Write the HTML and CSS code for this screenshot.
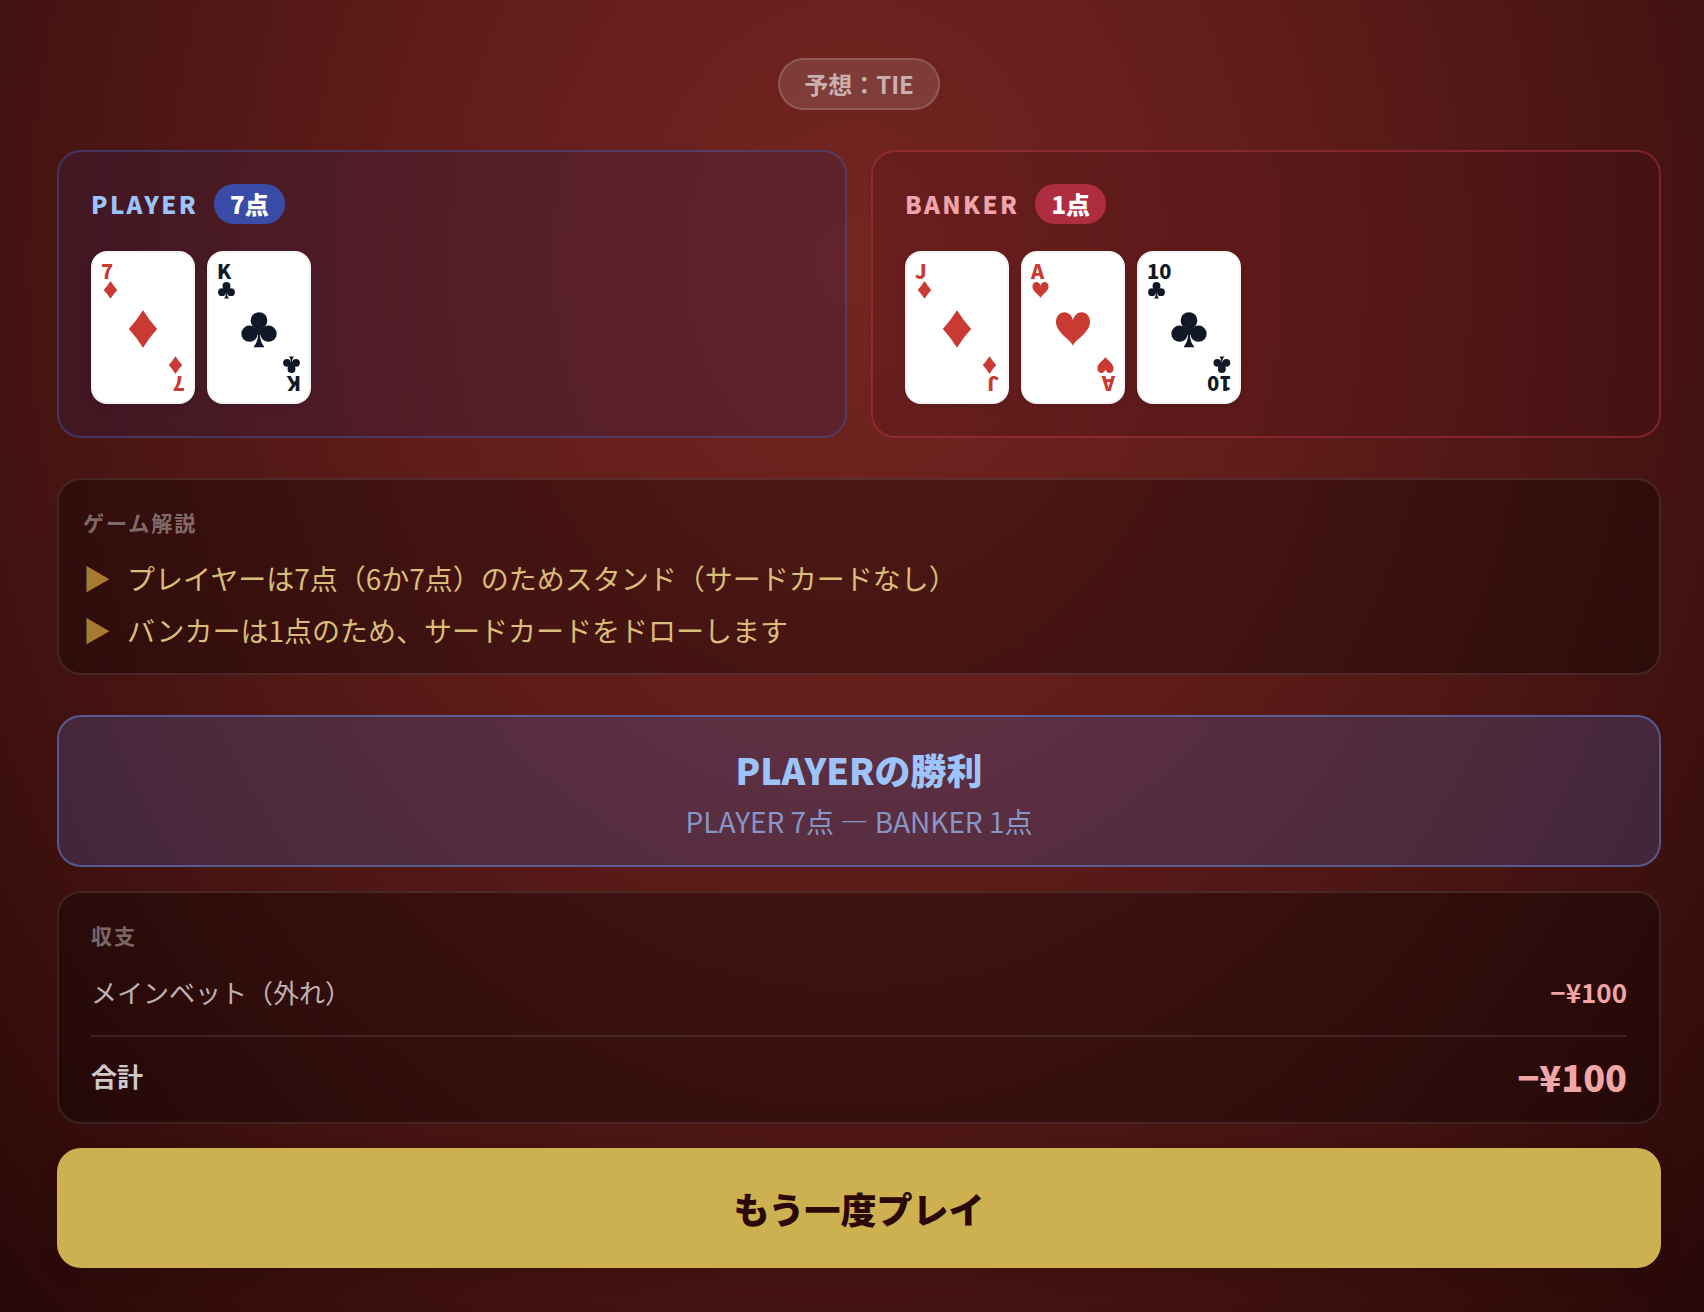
FILE: index.html
```html
<!DOCTYPE html>
<html lang="ja">
<head>
    <meta charset="UTF-8">
    <meta name="viewport" content="width=device-width, initial-scale=1.0">
    <title>バカラ</title>
    <link rel="stylesheet" href="styles.css">
</head>

<body>
    <!-- スート -->
    <svg class="defs" width="0" height="0" aria-hidden="true">
        <symbol id="diamond" viewBox="0 0 24 24">
            <path d="M12 1.400 Q15.800 7.500 20.500 12.600 Q15.800 17.700 12 23.800 Q8.200 17.700 3.500 12.600 Q8.200 7.500 12 1.400Z"/>
        </symbol>
        <symbol id="heart" viewBox="0 0 24 24">
            <path d="M12 22.600 C10.500 19 1.800 14.800 1.800 8.300 C1.800 5 4 2.500 6.900 2.500 C9.300 2.500 11.300 4.400 12 7.200 C12.700 4.400 14.700 2.500 17.100 2.500 C20 2.500 22.200 5 22.200 8.300 C22.200 14.800 13.500 19 12 22.600Z"/>
        </symbol>
        <symbol id="club" viewBox="0 0 24 24">
            <circle cx="12" cy="7.500" r="5"/>
            <circle cx="6.300" cy="15.400" r="4.900"/>
            <circle cx="17.700" cy="15.400" r="4.900"/>
            <path d="M9 10 H15 L13.500 16 H10.500Z"/>
            <path d="M11.500 15 H12.500 C12.600 19 13.600 21.400 15 23 V23.500 H9 V23 C10.400 21.400 11.400 19 11.500 15Z"/>
        </symbol>
    </svg>

    <main class="game">
        <p class="guess">予想：TIE</p>

        <div class="hands">
            <section class="hand player">
                <div class="hand-header">
                    <h2>PLAYER</h2>
                    <span class="points">7点</span>
                </div>
                <div class="cards">
                    <div class="card red">
                        <div class="corner">7<svg><use href="#diamond"/></svg></div>
                        <svg class="suit"><use href="#diamond"/></svg>
                        <div class="corner bottom">7<svg><use href="#diamond"/></svg></div>
                    </div>
                    <div class="card">
                        <div class="corner">K<svg><use href="#club"/></svg></div>
                        <svg class="suit"><use href="#club"/></svg>
                        <div class="corner bottom">K<svg><use href="#club"/></svg></div>
                    </div>
                </div>
            </section>

            <section class="hand banker">
                <div class="hand-header">
                    <h2>BANKER</h2>
                    <span class="points">1点</span>
                </div>
                <div class="cards">
                    <div class="card red">
                        <div class="corner">J<svg><use href="#diamond"/></svg></div>
                        <svg class="suit"><use href="#diamond"/></svg>
                        <div class="corner bottom">J<svg><use href="#diamond"/></svg></div>
                    </div>
                    <div class="card red">
                        <div class="corner">A<svg><use href="#heart"/></svg></div>
                        <svg class="suit"><use href="#heart"/></svg>
                        <div class="corner bottom">A<svg><use href="#heart"/></svg></div>
                    </div>
                    <div class="card">
                        <div class="corner">10<svg><use href="#club"/></svg></div>
                        <svg class="suit"><use href="#club"/></svg>
                        <div class="corner bottom">10<svg><use href="#club"/></svg></div>
                    </div>
                </div>
            </section>
        </div>

        <section class="commentary">
            <h3>ゲーム解説</h3>
            <ul>
                <li>プレイヤーは7点（6か7点）のためスタンド（サードカードなし）</li>
                <li>バンカーは1点のため、サードカードをドローします</li>
            </ul>
        </section>

        <section class="result">
            <h2>PLAYERの勝利</h2>
            <p>PLAYER 7点 ― BANKER 1点</p>
        </section>

        <section class="balance">
            <h3>収支</h3>
            <div class="row">
                <span>メインベット（外れ）</span>
                <span class="amount">−¥100</span>
            </div>
            <div class="row total">
                <span>合計</span>
                <span class="amount">−¥100</span>
            </div>
        </section>

        <button type="button" class="replay">もう一度プレイ</button>
    </main>
</body>
</html>
```
FILE: styles.css
```css
* {
    box-sizing: border-box;
}

body {
    margin: 0;
    min-height: 100vh;
    font-family: 'Noto Sans CJK JP', sans-serif;
    color: #fff;
    background: radial-gradient(ellipse at 50% 20%, #742520 0%, #611d1a 35%, #441311 70%, #280807 100%);
}

h2,
h3,
p,
ul {
    margin: 0;
    padding: 0;
}

.defs {
    position: absolute;
}

.game {
    display: flex;
    flex-direction: column;
    padding: 58px 43px 44px 57px;
}

.guess {
    align-self: center;
    padding: 8px 24px;
    border: 2px solid rgba(255, 255, 255, 0.15);
    border-radius: 26px;
    background: rgba(255, 255, 255, 0.12);
    color: rgba(255, 255, 255, 0.6);
    font-size: 24px;
    font-weight: 700;
    line-height: 32px;
}

.hands {
    display: grid;
    grid-template-columns: 1fr 1fr;
    gap: 24px;
    margin: 40px 0;
}

.hand {
    padding: 32px;
    border: 2px solid;
    border-radius: 24px;
}

.player {
    border-color: rgba(70, 90, 170, 0.45);
    background: rgba(45, 30, 85, 0.25);
}

.banker {
    border-color: rgba(190, 60, 75, 0.45);
    background: rgba(70, 10, 25, 0.2);
}

.hand-header {
    display: flex;
    align-items: center;
    gap: 16px;
    margin-bottom: 27px;
}

.hand-header h2 {
    font-size: 24px;
    font-weight: 900;
    line-height: 40px;
    letter-spacing: 0.1em;
}

.player h2 {
    color: #9cc4fb;
}

.banker h2 {
    color: #f0a3ab;
}

.points {
    padding: 0 16px;
    border-radius: 20px;
    font-size: 24px;
    font-weight: 900;
    line-height: 40px;
}

.player .points {
    background: #3b4ba8;
}

.banker .points {
    background: #ae2d40;
}

.cards {
    display: flex;
    gap: 12px;
}

.card {
    position: relative;
    display: flex;
    align-items: center;
    justify-content: center;
    width: 104px;
    height: 153px;
    border: 2px solid #f3f4f6;
    border-radius: 16px;
    background: #fff;
    color: #111827;
    box-shadow: 0 2px 6px rgba(0, 0, 0, 0.1);
}

.card.red {
    color: #c93a32;
}

.card svg {
    display: block;
    fill: currentColor;
}

.suit {
    width: 40px;
    height: 40px;
}

.corner {
    position: absolute;
    top: 8px;
    left: 8px;
    font-size: 20px;
    font-weight: 900;
    line-height: 19px;
}

.corner svg {
    width: 19px;
    height: 19px;
}

.corner.bottom {
    top: auto;
    right: 8px;
    bottom: 8px;
    left: auto;
    transform: rotate(180deg);
}

.commentary,
.balance {
    border: 2px solid rgba(255, 255, 255, 0.1);
    border-radius: 24px;
    background: rgba(0, 0, 0, 0.3);
}

.commentary {
    padding: 24px 24px 21px;
}

h3 {
    color: rgba(255, 255, 255, 0.4);
    font-size: 21px;
    font-weight: 700;
    line-height: 36px;
    letter-spacing: 2px;
}

.commentary ul {
    display: flex;
    flex-direction: column;
    gap: 8px;
    margin-top: 16px;
    list-style: none;
}

.commentary li {
    display: flex;
    gap: 16px;
    color: #d9bd78;
    font-size: 28px;
    line-height: 44px;
}

.commentary li::before {
    content: "▶";
    color: #a67a30;
}

.result {
    margin: 40px 0 24px;
    padding: 26px 32px 22px;
    border: 2px solid rgba(96, 125, 200, 0.6);
    border-radius: 24px;
    background: rgba(79, 90, 155, 0.3);
    text-align: center;
}

.result h2 {
    margin-bottom: 4px;
    color: #9cc4fb;
    font-size: 36px;
    font-weight: 900;
    line-height: 52px;
}

.result p {
    color: #8796c6;
    font-size: 28px;
    line-height: 44px;
}

.balance {
    padding: 24px 32px 20px;
}

.row {
    display: flex;
    align-items: center;
    justify-content: space-between;
    margin-top: 19px;
    color: rgba(255, 255, 255, 0.7);
    font-size: 26px;
    line-height: 40px;
}

.amount {
    color: #f1a5a5;
    font-weight: 700;
}

.total {
    margin-top: 23px;
    padding-top: 13px;
    border-top: 2px solid rgba(255, 255, 255, 0.1);
    color: rgba(255, 255, 255, 0.8);
    font-weight: 700;
    line-height: 52px;
}

.total .amount {
    font-size: 36px;
    font-weight: 900;
}

.replay {
    height: 120px;
    margin-top: 24px;
    border: none;
    border-radius: 24px;
    background: #cdb04f;
    color: #2a0808;
    font-family: inherit;
    font-size: 36px;
    font-weight: 900;
    box-shadow: 0 8px 20px rgba(0, 0, 0, 0.1);
    cursor: pointer;
}

.replay:hover {
    background: #d8bd5e;
}
```
